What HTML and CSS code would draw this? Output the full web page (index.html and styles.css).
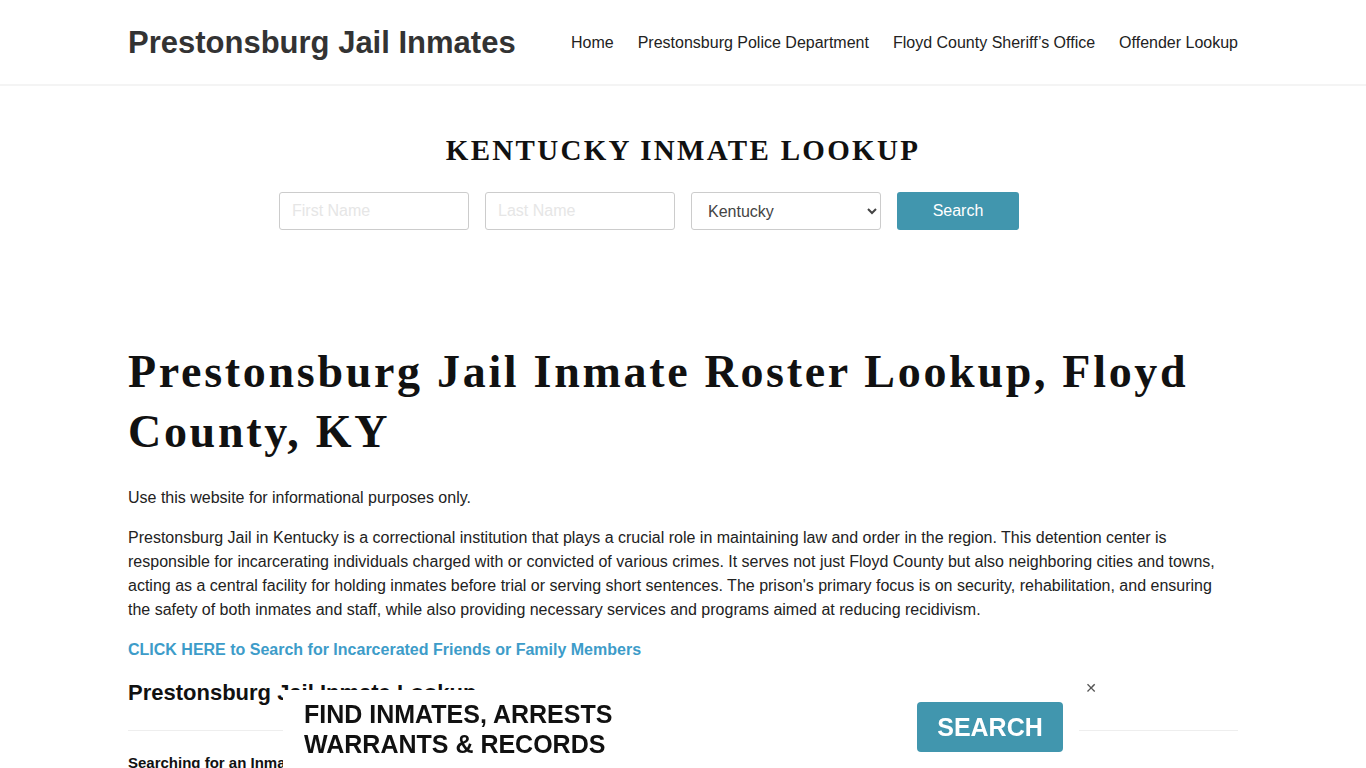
FILE: index.html
```html
<!DOCTYPE html>
<html>
<head>
    <title>Prestonsburg Jail Inmates</title>
    <link rel="stylesheet" href="styles.css">
</head>
<body>
    <header class="site-header">
        <div class="container header-inner">
            <a class="brand" href="#">Prestonsburg Jail Inmates</a>
            <nav class="main-nav">
                <a href="#">Home</a>
                <a href="#">Prestonsburg Police Department</a>
                <a href="#">Floyd County Sheriff’s Office</a>
                <a href="#">Offender Lookup</a>
            </nav>
        </div>
    </header>

    <section class="lookup">
        <h2 class="lookup-title">KENTUCKY INMATE LOOKUP</h2>
        <form class="lookup-form">
            <input type="text" placeholder="First Name">
            <input type="text" placeholder="Last Name">
            <select>
                <option>Kentucky</option>
            </select>
            <button type="button">Search</button>
        </form>
    </section>

    <main class="container content">
        <h1>Prestonsburg Jail Inmate Roster Lookup, Floyd County, KY</h1>
        <p>Use this website for informational purposes only.</p>
        <p>Prestonsburg Jail in Kentucky is a correctional institution that plays a crucial role in maintaining law and order in the region. This detention center is responsible for incarcerating individuals charged with or convicted of various crimes. It serves not just Floyd County but also neighboring cities and towns, acting as a central facility for holding inmates before trial or serving short sentences. The prison's primary focus is on security, rehabilitation, and ensuring the safety of both inmates and staff, while also providing necessary services and programs aimed at reducing recidivism.</p>
        <p><a class="cta-link" href="#">CLICK HERE to Search for Incarcerated Friends or Family Members</a></p>
        <h3 class="section-title">Prestonsburg Jail Inmate Lookup</h3>
        <hr>
        <h4 class="sub-title">Searching for an Inmate in Prestonsburg Jail</h4>
    </main>

    <div class="promo-bar">
        <div class="promo-text">FIND INMATES, ARRESTS<br>WARRANTS &amp; RECORDS</div>
        <a class="promo-btn" href="#">SEARCH</a>
        <span class="promo-close">&#x2715;</span>
    </div>
</body>
</html>
```

FILE: styles.css
```css
body {
    margin: 0;
    font-family: "Liberation Sans", Arial, sans-serif;
    font-size: 16px;
    line-height: 24px;
    color: #222;
    background: #fff;
}
a {
    text-decoration: none;
}
.container {
    width: 1110px;
    margin: 0 auto;
}
.site-header {
    height: 84px;
    border-bottom: 2px solid #f4f4f4;
}
.header-inner {
    display: flex;
    align-items: center;
    justify-content: space-between;
    height: 84px;
}
.brand {
    font-size: 31px;
    font-weight: bold;
    color: #333;
    margin-top: 1px;
}
.main-nav {
    display: flex;
    gap: 24px;
    margin-top: 1px;
}
.main-nav a {
    color: #222;
    font-size: 16px;
}
.lookup {
    text-align: center;
    padding-top: 48px;
    height: 215px;
    box-sizing: border-box;
}
.lookup-title {
    font-family: "Liberation Serif", "Times New Roman", serif;
    font-size: 29px;
    font-weight: bold;
    letter-spacing: 2.3px;
    color: #111;
    margin: 0 0 26px;
    line-height: 32px;
}
.lookup-form {
    display: flex;
    justify-content: center;
    gap: 16px;
    padding-right: 68px;
}
.lookup-form input,
.lookup-form select {
    width: 190px;
    height: 38px;
    box-sizing: border-box;
    border: 1px solid #ccc;
    border-radius: 3px;
    padding: 0 12px;
    font-family: "Liberation Sans", Arial, sans-serif;
    font-size: 16px;
    color: #444;
    background: #fff;
}
.lookup-form input::placeholder {
    color: #e6e6e6;
}
.lookup-form select {
    padding-left: 12px;
}
.lookup-form button {
    width: 122px;
    height: 38px;
    border: 0;
    border-radius: 3px;
    background: #4196ae;
    color: #fff;
    font-family: "Liberation Sans", Arial, sans-serif;
    font-size: 16px;
}
.content {
    padding-top: 41px;
}
.content h1 {
    font-family: "Liberation Serif", "Times New Roman", serif;
    font-size: 46px;
    line-height: 60px;
    letter-spacing: 2.7px;
    font-weight: bold;
    color: #111;
    margin: 0 0 24px;
}
.content p {
    margin: 0 0 16px;
}
.cta-link {
    color: #3d9cc9;
    font-weight: bold;
}
.section-title {
    font-size: 22px;
    font-weight: bold;
    color: #111;
    margin: 16px 0 0;
    line-height: 30px;
}
.content hr {
    border: 0;
    border-top: 1px solid #eee;
    margin: 22px 0 0;
}
.sub-title {
    font-size: 15px;
    font-weight: bold;
    color: #111;
    margin: 20px 0 0;
}
.promo-bar {
    position: fixed;
    left: 283px;
    bottom: 0;
    width: 796px;
    height: 78px;
    background: #fff;
    box-sizing: border-box;
    padding: 12px 16px 0 21px;
    display: flex;
    justify-content: space-between;
    align-items: flex-start;
}
.promo-text {
    font-size: 25px;
    font-weight: bold;
    line-height: 30px;
    color: #111;
    margin-top: -3px;
}
.promo-btn {
    display: block;
    width: 146px;
    height: 50px;
    line-height: 50px;
    text-align: center;
    background: #4196ae;
    color: #fff;
    font-size: 25px;
    font-weight: bold;
    border-radius: 4px;
}
.promo-close {
    position: absolute;
    right: -18px;
    top: -10px;
    font-size: 14px;
    line-height: 16px;
    color: #555;
    font-family: "DejaVu Sans", sans-serif;
    font-weight: bold;
}
```
